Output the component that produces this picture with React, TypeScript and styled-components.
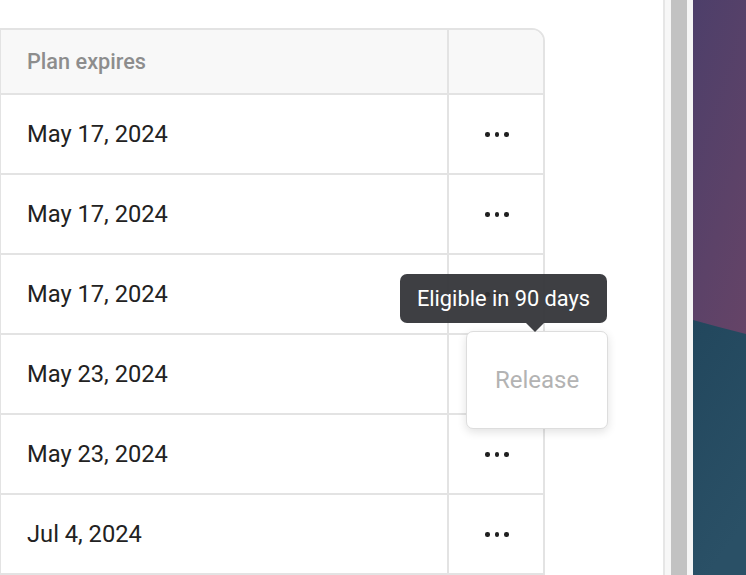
import React from "react";
import styled, { createGlobalStyle } from "styled-components";

const Global = createGlobalStyle`
  html, body { margin: 0; padding: 0; background: #ffffff; }
  body { font-family: Roboto, "Noto Sans", "Liberation Sans", sans-serif; overflow: hidden; }
  * { box-sizing: border-box; }
`;

const Screen = styled.div`
  display: flex;
  width: 746px;
  height: 575px;
  overflow: hidden;
`;

const Panel = styled.main`
  width: 663px;
  flex: none;
  background: #ffffff;
  padding-top: 28px;
`;

const Table = styled.div`
  width: 545px;
  border: 2px solid #e3e3e3;
  border-left-width: 1px;
  border-top-right-radius: 13px;
`;

const Row = styled.div<{ $header?: boolean; $last?: boolean }>`
  display: grid;
  grid-template-columns: 448px 94px;
  height: ${(p) => (p.$header ? "65px" : p.$last ? "78px" : "80px")};
  border-bottom: ${(p) => (p.$last ? "none" : "2px solid #e3e3e3")};
  background: ${(p) => (p.$header ? "#f8f8f8" : "#ffffff")};
  border-top-right-radius: ${(p) => (p.$header ? "11px" : "0")};
`;

const DateCell = styled.div<{ $header?: boolean }>`
  display: flex;
  align-items: center;
  padding-left: 26px;
  border-right: 2px solid #e3e3e3;
  font-size: ${(p) => (p.$header ? "21.7px" : "23.7px")};
  font-weight: ${(p) => (p.$header ? 500 : 400)};
  color: ${(p) => (p.$header ? "#8d8d8d" : "#222222")};
`;

const ActionCell = styled.div`
  position: relative;
  display: flex;
  align-items: center;
  justify-content: center;
  padding-top: 1px;
  padding-left: 2px;
`;

const Dots = styled.div`
  display: flex;
  gap: 5px;
`;

const Dot = styled.span`
  width: 4.5px;
  height: 4.5px;
  border-radius: 50%;
  background: #1f1f1f;
`;

const Tooltip = styled.div`
  position: absolute;
  z-index: 20;
  left: -49px;
  top: 19px;
  width: 207px;
  height: 49px;
  border-radius: 7px;
  background: rgba(50, 51, 55, 0.94);
  color: #ffffff;
  font-size: 21.8px;
  display: flex;
  align-items: center;
  justify-content: center;
  white-space: nowrap;

  &::after {
    content: "";
    position: absolute;
    left: 126px;
    bottom: -9px;
    border-left: 9px solid transparent;
    border-right: 9px solid transparent;
    border-top: 9px solid rgba(50, 51, 55, 0.94);
  }
`;

const Menu = styled.div`
  position: absolute;
  z-index: 10;
  left: 17px;
  top: 76px;
  width: 142px;
  height: 98px;
  border-radius: 7px;
  background: #ffffff;
  border: 1px solid #dddddd;
  box-shadow: 0 3px 10px rgba(0, 0, 0, 0.12);
  display: flex;
  align-items: center;
  justify-content: center;
`;

const MenuItem = styled.span`
  font-size: 24px;
  color: #b3b3b3;
`;

const Divider = styled.div<{ $w: number; $c: string }>`
  width: ${(p) => p.$w}px;
  flex: none;
  background: ${(p) => p.$c};
`;

const Wallpaper = styled.div`
  flex: 1;
  height: 575px;
`;

const dates = [
  "May 17, 2024",
  "May 17, 2024",
  "May 17, 2024",
  "May 23, 2024",
  "May 23, 2024",
  "Jul 4, 2024",
];

function More() {
  return (
    <Dots>
      <Dot />
      <Dot />
      <Dot />
    </Dots>
  );
}

export default function App() {
  return (
    <>
      <Global />
      <Screen>
        <Panel>
          <Table>
            <Row $header>
              <DateCell $header>Plan expires</DateCell>
              <ActionCell />
            </Row>
            {dates.map((d, i) => (
              <Row key={i} $last={i === dates.length - 1}>
                <DateCell>{d}</DateCell>
                <ActionCell>
                  <More />
                  {i === 2 && (
                    <>
                      <Tooltip>Eligible in 90 days</Tooltip>
                      <Menu>
                        <MenuItem>Release</MenuItem>
                      </Menu>
                    </>
                  )}
                </ActionCell>
              </Row>
            ))}
          </Table>
        </Panel>
        <Divider $w={2} $c="#e6e6e6" />
        <Divider $w={6} $c="#f7f7f7" />
        <Divider $w={16} $c="#c2c2c2" />
        <Divider $w={6} $c="#f5f5f5" />
        <Wallpaper>
          <svg width="53" height="575" viewBox="0 0 53 575">
            <defs>
              <linearGradient id="purple" x1="0" y1="0" x2="0.3" y2="1">
                <stop offset="0" stopColor="#4d3f6a" />
                <stop offset="1" stopColor="#6b4566" />
              </linearGradient>
              <linearGradient id="teal" x1="0" y1="0" x2="0.3" y2="1">
                <stop offset="0" stopColor="#22475d" />
                <stop offset="1" stopColor="#2a5066" />
              </linearGradient>
            </defs>
            <rect x="0" y="0" width="53" height="575" fill="url(#purple)" />
            <path d="M0 320 Q 25 327 53 334 L53 575 L0 575 Z" fill="url(#teal)" />
          </svg>
        </Wallpaper>
      </Screen>
    </>
  );
}
